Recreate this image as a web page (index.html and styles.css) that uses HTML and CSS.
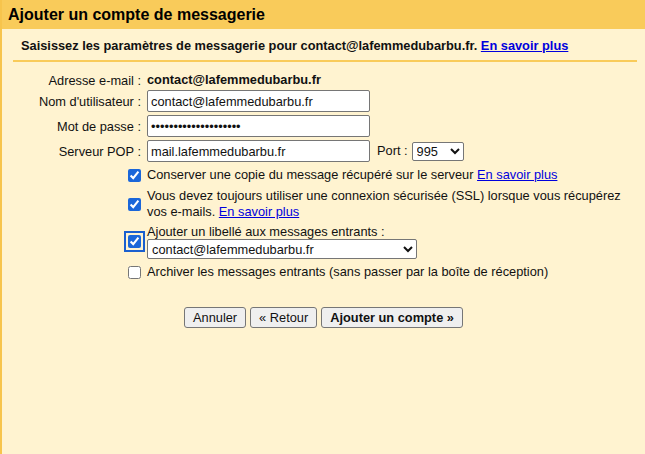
FILE: index.html
```html
<!DOCTYPE html>
<html lang="fr">
<head>
<meta charset="utf-8">
<title>Ajouter un compte de messagerie</title>
<link rel="stylesheet" href="styles.css">
</head>
<body>
<div class="page">
  <div class="header"><h1 class="title">Ajouter un compte de messagerie</h1></div>
  <div class="intro">Saisissez les paramètres de messagerie pour contact@lafemmedubarbu.fr. <a href="#" class="link bold">En savoir plus</a></div>
  <div class="rule"></div>
  <div class="form">
    <div class="row r-addr">
      <div class="lbl">Adresse e-mail :</div>
      <div class="val"><b>contact@lafemmedubarbu.fr</b></div>
    </div>
    <div class="row r-input">
      <div class="lbl">Nom d'utilisateur :</div>
      <div class="val"><input class="txt" type="text" value="contact@lafemmedubarbu.fr"></div>
    </div>
    <div class="row r-input">
      <div class="lbl">Mot de passe :</div>
      <div class="val"><input class="txt" type="password" value="abcdefghijklmnopqrst"></div>
    </div>
    <div class="row r-input">
      <div class="lbl">Serveur POP :</div>
      <div class="val val-inline"><input class="txt" type="text" value="mail.lafemmedubarbu.fr"><span class="port-lbl">Port :</span><select class="port"><option>995</option></select></div>
    </div>
    <div class="row r-check r-first">
      <div class="lbl"><input class="cb" type="checkbox" checked></div>
      <div class="val">Conserver une copie du message récupéré sur le serveur <a href="#" class="link">En savoir plus</a></div>
    </div>
    <div class="row r-check">
      <div class="lbl"><input class="cb" type="checkbox" checked></div>
      <div class="val wrap">Vous devez toujours utiliser une connexion sécurisée (SSL) lorsque vous récupérez vos e-mails. <a href="#" class="link">En savoir plus</a></div>
    </div>
    <div class="row r-check r-label">
      <div class="lbl"><input class="cb cb-focus" type="checkbox" checked></div>
      <div class="val">
        <div class="lbl-text">Ajouter un libellé aux messages entrants :</div>
        <select class="label-sel"><option>contact@lafemmedubarbu.fr</option></select>
      </div>
    </div>
    <div class="row r-check">
      <div class="lbl"><input class="cb" type="checkbox"></div>
      <div class="val">Archiver les messages entrants (sans passer par la boîte de réception)</div>
    </div>
  </div>
  <div class="buttons">
    <button class="btn">Annuler</button>
    <button class="btn">« Retour</button>
    <button class="btn bold">Ajouter un compte »</button>
  </div>
</div>
</body>
</html>
```

FILE: styles.css
```css
html, body {
  margin: 0;
  padding: 0;
  height: 100%;
}
body {
  background: #fff3d0;
  font-family: "Liberation Sans", Arial, sans-serif;
  font-size: 12.8px;
  color: #111;
}
.page {
  min-height: 100%;
  border-left: 2px solid #f7c44c;
  box-sizing: border-box;
}
.header {
  background: #f9cb5a;
  height: 29px;
  display: flex;
  align-items: center;
  padding-left: 6px;
}
.title {
  margin: 0;
  font-size: 16px;
  font-weight: bold;
  color: #000;
}
.intro {
  font-weight: bold;
  padding: 9px 0 0 19px;
  height: 22px;
  line-height: 15px;
  color: #111;
}
.link {
  color: #0000dd;
  text-decoration: underline;
}
.bold {
  font-weight: bold;
}
.rule {
  height: 2px;
  background: #f9cb5a;
  margin: 0 8px 0 11px;
}
.form {
  padding-top: 10px;
  display: flex;
  flex-direction: column;
}
.row {
  display: flex;
  align-items: center;
}
.lbl {
  width: 139px;
  flex: none;
  text-align: right;
  display: flex;
  justify-content: flex-end;
  align-items: center;
}
.val {
  margin-left: 6px;
  line-height: 16px;
}
.val-inline {
  display: flex;
  align-items: center;
}
.wrap {
  width: 490px;
}
.r-addr {
  height: 16px;
}
.r-input {
  margin-top: 3px;
  height: 22px;
}
.r-addr + .r-input {
  margin-top: 2px;
}
.txt {
  box-sizing: border-box;
  width: 223px;
  height: 22px;
  border: 1px solid #767676;
  border-radius: 2px;
  background: #fff;
  font-family: "Liberation Sans", Arial, sans-serif;
  font-size: 12.8px;
  color: #111;
  padding: 0 3px;
  margin: 0;
}
.port-lbl {
  margin-left: 7px;
  margin-right: 4px;
}
.port {
  box-sizing: border-box;
  width: 52px;
  height: 19px;
  font-family: "Liberation Sans", Arial, sans-serif;
  font-size: 12.8px;
  border: 1px solid #767676;
  border-radius: 2px;
  background: #fff;
  color: #111;
  padding: 0;
  margin: 0;
}
.r-check {
  margin-top: 5px;
}
.r-label {
  margin-top: 4px;
}
.cb {
  width: 13px;
  height: 13px;
  margin: 0;
  accent-color: #1a66d9;
}
.cb-focus {
  outline: 2px solid #1a5fcf;
  outline-offset: 2px;
  border-radius: 2px;
}
.lbl-text {
  line-height: 15px;
}
.label-sel {
  display: block;
  box-sizing: border-box;
  width: 270px;
  height: 20px;
  font-family: "Liberation Sans", Arial, sans-serif;
  font-size: 12.8px;
  border: 1px solid #767676;
  border-radius: 2px;
  background: #fff;
  color: #111;
  padding: 0;
  margin: 0;
}
.buttons {
  display: flex;
  gap: 4px;
  padding: 27px 0 0 182px;
}
.btn {
  height: 21px;
  box-sizing: border-box;
  padding: 0 8px;
  border: 1px solid #767676;
  border-radius: 3px;
  background: #efefef;
  font-family: "Liberation Sans", Arial, sans-serif;
  font-size: 12.8px;
  color: #111;
  margin: 0;
}
```
